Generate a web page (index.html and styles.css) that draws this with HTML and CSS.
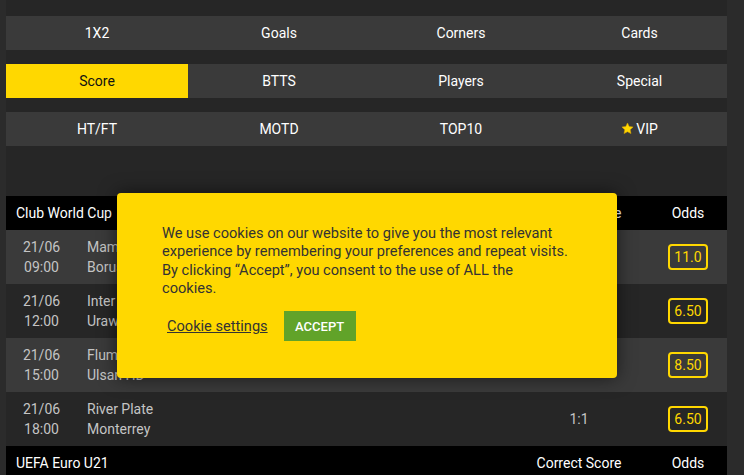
FILE: index.html
```html
<!DOCTYPE html>
<html lang="en">
<head>
<meta charset="utf-8">
<title>Score</title>
<link rel="stylesheet" href="styles.css">
</head>
<body>
<div class="page">
  <nav class="tabs">
    <a class="tab">1X2</a><a class="tab">Goals</a><a class="tab">Corners</a><a class="tab">Cards</a>
  </nav>
  <nav class="tabs">
    <a class="tab active">Score</a><a class="tab">BTTS</a><a class="tab">Players</a><a class="tab">Special</a>
  </nav>
  <nav class="tabs">
    <a class="tab">HT/FT</a><a class="tab">MOTD</a><a class="tab">TOP10</a>
    <a class="tab"><svg class="star" viewBox="0 0 24 24" width="13" height="13"><path d="M12 1.8l3.1 6.6 7.2.9-5.3 5 1.4 7.1L12 17.9l-6.4 3.5 1.4-7.1-5.3-5 7.2-.9z" fill="#ffd700" stroke="#d9a400" stroke-width="1"/></svg>VIP</a>
  </nav>

  <section class="league">
    <div class="head"><span class="lname">Club World Cup</span><span class="hcol">Correct Score</span><span class="hodds">Odds</span></div>
    <div class="row light"><div class="dt">21/06<br>09:00</div><div class="teams">Mamelodi Sundowns<br>Borussia Dortmund</div><div class="sc">1:2</div><div class="odds"><span class="ob">11.0</span></div></div>
    <div class="row"><div class="dt">21/06<br>12:00</div><div class="teams">Inter<br>Urawa Red Diamonds</div><div class="sc">2:0</div><div class="odds"><span class="ob">6.50</span></div></div>
    <div class="row light"><div class="dt">21/06<br>15:00</div><div class="teams">Fluminense<br>Ulsan HD</div><div class="sc">2:1</div><div class="odds"><span class="ob">8.50</span></div></div>
    <div class="row"><div class="dt">21/06<br>18:00</div><div class="teams">River Plate<br>Monterrey</div><div class="sc">1:1</div><div class="odds"><span class="ob">6.50</span></div></div>
    <div class="head"><span class="lname">UEFA Euro U21</span><span class="hcol">Correct Score</span><span class="hodds">Odds</span></div>
  </section>
</div>

<div class="cookie">
  <p class="ctext">We use cookies on our website to give you the most relevant experience by remembering your preferences and repeat visits. By clicking “Accept”, you consent to the use of ALL the cookies.</p>
  <div class="cactions"><a class="csettings">Cookie settings</a><button class="caccept">ACCEPT</button></div>
</div>
</body>
</html>
```
FILE: styles.css
```css
html, body { margin: 0; padding: 0; }
body {
  background: #2b2b2b;
  font-family: Roboto, "Liberation Sans", Arial, sans-serif;
  font-size: 14px;
  color: #fff;
  height: 475px;
  overflow: hidden;
}
.page {
  width: 721px;
  margin-left: 6px;
  background: #262626;
  min-height: 475px;
  padding-top: 16px;
  box-sizing: border-box;
  overflow: hidden;
}
.tabs {
  display: grid;
  grid-template-columns: 182px 182px 182px 1fr;
  height: 34px;
  background: #3a3a3a;
  margin-bottom: 14px;
}
.tab {
  display: flex;
  align-items: center;
  justify-content: center;
  color: #fff;
  font-size: 14px;
  text-decoration: none;
  padding-bottom: 1px;
  box-sizing: border-box;
}
.tab.active { background: #ffd800; color: #111; }
.star { margin-right: 2px; }
.league { margin-top: 50px; }
.head {
  display: grid;
  grid-template-columns: 1fr 100px 98px;
  height: 34px;
  align-items: center;
  background: #000;
  color: #fff;
}
.lname { padding-left: 10px; }
.hcol { text-align: center; }
.hodds { text-align: center; padding-left: 20px; }
.row {
  display: grid;
  grid-template-columns: 71px 1fr 100px 98px;
  height: 54px;
  align-items: center;
  background: #262626;
  color: #c4c4c4;
  line-height: 20px;
  padding-bottom: 1px;
  box-sizing: border-box;
}
.row.light { background: #3a3a3a; }
.dt { text-align: center; }
.teams { padding-left: 10px; }
.sc { text-align: center; }
.odds { text-align: center; padding-left: 20px; }
.ob {
  display: inline-block;
  border: 2px solid #ffd700;
  border-radius: 4px;
  color: #ffd700;
  padding: 0 4px;
  line-height: 22px;
  font-size: 14px;
}
.cookie {
  position: absolute;
  left: 117px;
  top: 193px;
  width: 500px;
  height: 185px;
  box-sizing: border-box;
  padding: 31px 47px 0 45px;
  background: #ffd800;
  border-radius: 4px;
  box-shadow: 0 0 18px rgba(0,0,0,0.55);
  color: #333;
  font-size: 14.6px;
}
.ctext { margin: 0; line-height: 18.3px; }
.cactions {
  display: flex;
  align-items: center;
  margin-top: 14px;
  gap: 16px;
  padding-left: 5px;
}
.csettings { color: #333; text-decoration: underline; font-size: 14.6px; }
.caccept {
  background: #61a329;
  color: #fff;
  border: 0;
  font-family: inherit;
  font-size: 13px;
  font-weight: 500;
  height: 30px;
  width: 72px;
  padding: 0;
}
```
